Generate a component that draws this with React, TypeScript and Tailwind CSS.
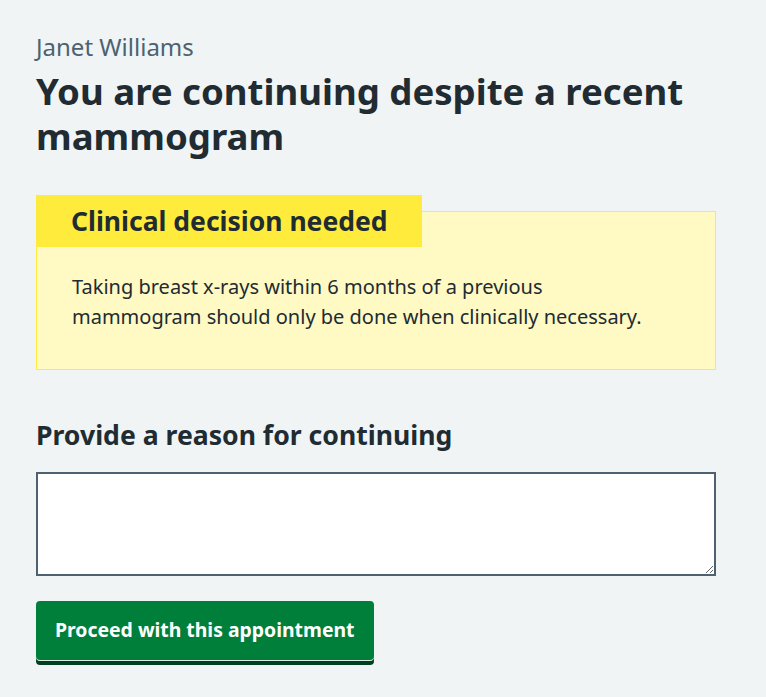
export default function App() {
  return (
    <div
      className="min-h-screen bg-[#f0f4f5] px-[36px] pt-[33px] text-[#212b32]"
      style={{ fontFamily: '"Noto Sans", Arial, sans-serif' }}
    >
      <div className="w-[680px]">
        <span className="block text-[24px] leading-[28px] text-[#4c6272]">Janet Williams</span>
        <h1 className="mt-[8px] text-[36.6px] font-bold leading-[45px]">
          You are continuing despite a recent mammogram
        </h1>

        <div className="relative mt-[52px] border border-[#ffeb3b] bg-[#fff9c4] px-[35px] pb-[37px] pt-[60px]">
          <h3 className="absolute left-[-1px] top-[-17px] bg-[#ffeb3b] py-[9px] pl-[35px] pr-[34px] text-[26.5px] font-bold leading-[34px]">
            Clinical decision needed
          </h3>
          <p className="max-w-[585px] text-[20px] leading-[30px]">
            Taking breast x-rays within 6 months of a previous mammogram should only be done when clinically
            necessary.
          </p>
        </div>

        <label className="mt-[49px] block text-[26.6px] font-bold leading-[32px]" htmlFor="reason">
          Provide a reason for continuing
        </label>
        <textarea
          id="reason"
          rows={3}
          className="mt-[21px] block h-[104px] w-full resize-y border-2 border-[#4c6272] bg-white p-[4px] text-[19px] outline-none"
        />

        <button className="mt-[25px] rounded-[4px] bg-[#007f3b] px-[19px] pb-[13px] pt-[12px] text-[19.4px] font-bold leading-[34px] text-white shadow-[0_1px_0_#dfe9e3,0_5px_0_#00401e]">
          Proceed with this appointment
        </button>
      </div>
    </div>
  );
}
